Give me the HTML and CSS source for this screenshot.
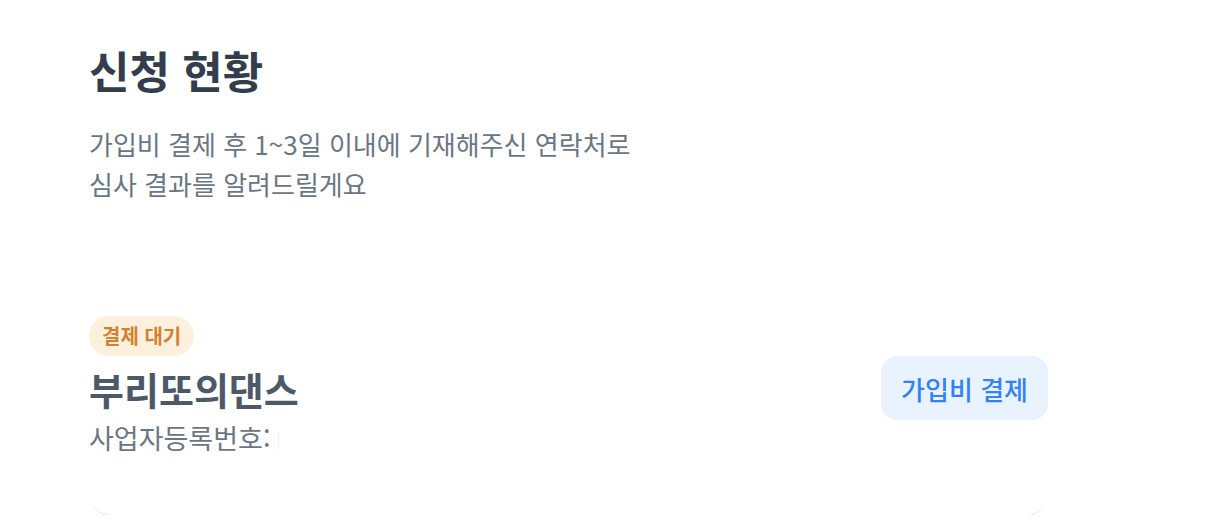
FILE: index.html
```html
<!DOCTYPE html>
<html lang="ko">
<head>
<meta charset="utf-8">
<link rel="stylesheet" href="styles.css">
</head>
<body>
<main class="page">
  <header class="intro">
    <h1 class="title">신청 현황</h1>
    <p class="desc">가입비 결제 후 1~3일 이내에 기재해주신 연락처로<br>심사 결과를 알려드릴게요</p>
  </header>
  <section class="card">
    <div class="info">
      <span class="badge">결제 대기</span>
      <h2 class="name">부리또의댄스</h2>
      <p class="biz">사업자등록번호: <span class="masked">&nbsp;</span></p>
    </div>
    <button class="pay">가입비 결제</button>
  </section>
</main>
</body>
</html>
```
FILE: styles.css
```css
* { box-sizing: border-box; }
html, body { margin: 0; padding: 0; background: #fff; }
body {
  font-family: "Noto Sans CJK KR", "Noto Sans", sans-serif;
  -webkit-font-smoothing: antialiased;
}
.page {
  width: 959px;
  margin-left: 89px;
  padding-top: 38px;
}
.title {
  margin: 0;
  font-size: 44px;
  line-height: 64px;
  font-weight: 700;
  color: #333d4b;
}
.desc {
  margin: 22px 0 0;
  font-size: 26px;
  line-height: 40px;
  font-weight: 400;
  color: #6b7684;
}
.card {
  margin-top: 112px;
  display: flex;
  align-items: flex-start;
  justify-content: space-between;
  padding-bottom: 59px;
  border-radius: 0 0 22px 22px;
  box-shadow: 0 2px 1px -1px rgba(0,0,0,0.1);
}
.info {
  display: flex;
  flex-direction: column;
  align-items: flex-start;
}
.badge {
  display: inline-block;
  height: 40px;
  line-height: 40px;
  padding: 0 13px;
  border-radius: 20px;
  background: #fdf1de;
  color: #d2822e;
  font-size: 20px;
  font-weight: 700;
}
.name {
  margin: 9px 0 0;
  font-size: 38px;
  line-height: 48px;
  font-weight: 700;
  color: #4e5968;
}
.biz {
  margin: 7px 0 0;
  font-size: 27px;
  line-height: 36px;
  color: #6b7684;
}
.masked {
  display: inline-block;
  width: 3px;
  height: 16px;
  vertical-align: middle;
  border-left: 1px dotted #e5e8eb;
}
.pay {
  margin-top: 40px;
  height: 64px;
  padding: 0 20px;
  border: 0;
  border-radius: 16px;
  background: #e8f3ff;
  color: #3182f6;
  font-family: inherit;
  font-size: 26px;
  font-weight: 500;
  cursor: pointer;
}
```
